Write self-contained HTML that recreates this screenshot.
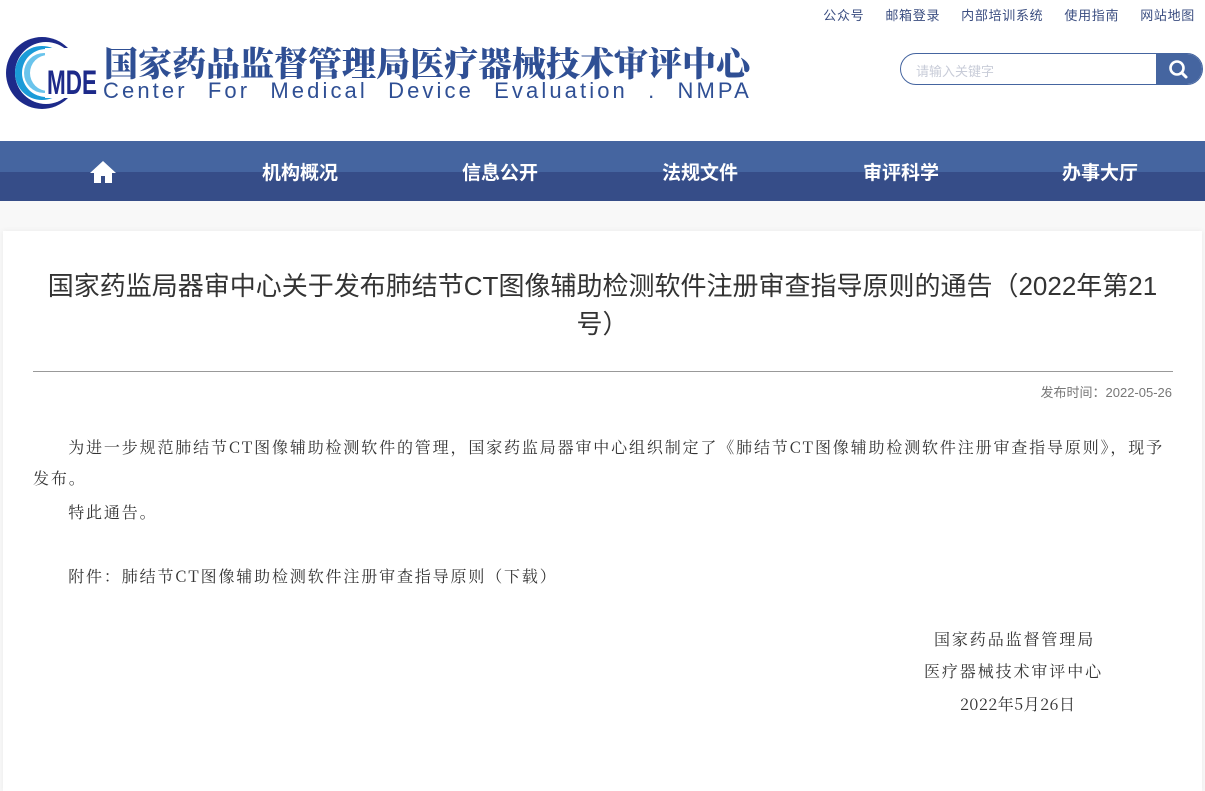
<!DOCTYPE html>
<html><head><meta charset="utf-8"><style>
*{margin:0;padding:0;box-sizing:border-box}
body{width:1205px;height:779px;overflow:hidden;background:#f8f8f8;font-family:"Liberation Sans","Noto Sans CJK SC",sans-serif;position:relative}
.header{position:absolute;left:0;top:0;width:1205px;height:141px;background:#fff}
.toplinks{position:absolute;top:5px;right:10px;font-size:13px;color:#3a4d80;letter-spacing:0.7px}
.toplinks span{margin-left:21px}
.t1{position:absolute;left:104px;top:37px;font-family:"Noto Serif CJK SC",serif;font-weight:900;font-size:34px;color:#2f4f94;letter-spacing:0px}
.t2{position:absolute;left:103px;top:78px;font-size:22px;color:#2f4f94;letter-spacing:3.1px;word-spacing:11px}
.search{position:absolute;left:900px;top:53px;width:303px;height:32px;border:1.5px solid #4565a0;border-radius:16px;overflow:hidden;background:#fff}
.search span{position:absolute;left:15px;top:7px;font-size:13px;color:#c8ccd8}
.search .btn{position:absolute;right:0;top:0;width:46px;height:100%;background:#4565a0}
.nav{position:absolute;left:0;top:141px;width:1205px;height:60px;background:linear-gradient(#4565a0 0,#4565a0 31px,#364d88 31px)}
.nav div{position:absolute;top:17px;color:#fff;font-weight:bold;font-size:19px}
.card{position:absolute;left:3px;top:231px;width:1199px;height:560px;background:#fff;box-shadow:0 0 6px rgba(0,0,0,.06)}
h1{position:absolute;left:37px;top:36px;width:1125px;text-align:center;font-weight:normal;font-size:26px;line-height:38px;color:#333}
.hr{position:absolute;left:30px;top:140px;width:1140px;height:1px;background:#999}
.date{position:absolute;right:30px;top:151px;font-size:13px;color:#777}
.body{position:absolute;left:30px;top:200px;width:1142px;font-family:"Noto Serif CJK SC","Liberation Serif",serif;font-size:16px;line-height:31px;color:#333;letter-spacing:1.85px}
.body p{text-indent:2.2em}
.sig{position:absolute;font-family:"Noto Serif CJK SC",serif;font-size:16px;color:#333;letter-spacing:1.9px}
</style></head><body>
<div class="header">
<div class="toplinks"><span>公众号</span><span>邮箱登录</span><span>内部培训系统</span><span>使用指南</span><span>网站地图</span></div>
<svg style="position:absolute;left:4px;top:34px" width="95" height="78" viewBox="0 0 95 78">
<circle cx="38" cy="39" r="36" fill="#1d2a8a"/>
<circle cx="42" cy="39" r="31" fill="#fff"/>
<circle cx="38" cy="39" r="27" fill="#1a9bd8"/>
<circle cx="42" cy="39" r="24" fill="#fff"/>
<circle cx="40" cy="39" r="20" fill="#6ac4ec"/>
<circle cx="44" cy="39" r="18" fill="#fff"/>
<rect x="41" y="14" width="54" height="50" fill="#fff"/>
<text x="43" y="60" font-family="Liberation Sans Narrow,Liberation Sans,sans-serif" font-weight="bold" font-size="34" fill="#1d2a8a" textLength="50" lengthAdjust="spacingAndGlyphs">MDE</text>
</svg>
<div class="t1">国家药品监督管理局医疗器械技术审评中心</div>
<div class="t2">Center For Medical Device Evaluation . NMPA</div>
<div class="search"><span>请输入关键字</span><div class="btn"><svg width="46" height="30" viewBox="0 0 46 30"><circle cx="21" cy="14" r="6.5" fill="none" stroke="#fff" stroke-width="2.6"/><path d="M26 19l4 4" stroke="#fff" stroke-width="3" stroke-linecap="round"/></svg></div></div>
</div>
<div class="nav">
<svg style="position:absolute;left:89px;top:19px" width="28" height="24" viewBox="0 0 28 24"><path d="M14 1L1 13h4v10h7v-7h4v7h7V13h4z" fill="#fff"/></svg>
<div style="left:262px">机构概况</div><div style="left:462px">信息公开</div><div style="left:662px">法规文件</div><div style="left:863px">审评科学</div><div style="left:1062px">办事大厅</div>
</div>
<div class="card">
<h1>国家药监局器审中心关于发布肺结节CT图像辅助检测软件注册审查指导原则的通告（2022年第21号）</h1>
<div class="hr"></div>
<div class="date">发布时间：2022-05-26</div>
<div class="body">
<p>为进一步规范肺结节CT图像辅助检测软件的管理，国家药监局器审中心组织制定了《肺结节CT图像辅助检测软件注册审查指导原则》，现予发布。</p>
<p style="margin-top:3px">特此通告。</p>
<p style="margin-top:33px">附件：肺结节CT图像辅助检测软件注册审查指导原则（下载）</p>
</div>
<div class="sig" style="left:931px;top:396px">国家药品监督管理局</div>
<div class="sig" style="left:921px;top:428px">医疗器械技术审评中心</div>
<div class="sig" style="left:957px;top:461px;letter-spacing:0.5px">2022年5月26日</div>
</div>
</body></html>
